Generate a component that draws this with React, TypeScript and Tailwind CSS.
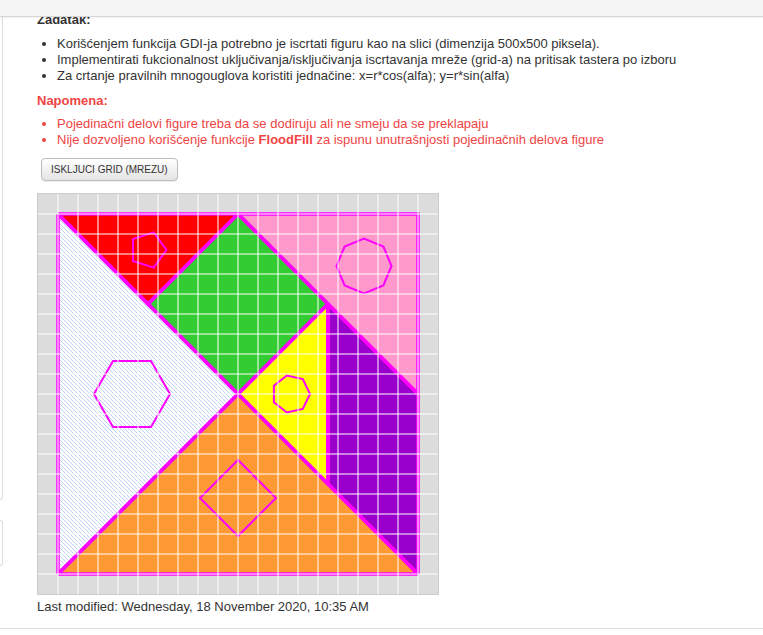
import React from "react";

// regular polygon points, first vertex at angle 0 (pointing right)
const ngon = (cx: number, cy: number, r: number, n: number) =>
  Array.from({ length: n }, (_, i) => {
    const a = (i * 2 * Math.PI) / n;
    return `${(cx + r * Math.cos(a)).toFixed(1)},${(cy + r * Math.sin(a)).toFixed(1)}`;
  }).join(" ");

const pieces = [
  { pts: "20,20 200,200 20,380", fill: "url(#hatch)" },
  { pts: "20,20 200,20 110,110", fill: "#ff0000" },
  { pts: "200,20 290,110 200,200 110,110", fill: "#33cc33" },
  { pts: "200,20 380,20 380,200", fill: "#ff99cc" },
  { pts: "200,200 290,110 290,290", fill: "#ffff00" },
  { pts: "290,110 380,200 380,380 290,290", fill: "#9900cc" },
  { pts: "20,380 200,200 380,380", fill: "#ff9933" },
];

const shapes = [
  ngon(110, 56, 18.5, 5),
  ngon(326, 72, 27.5, 8),
  ngon(94, 200, 38, 6),
  ngon(253, 200, 19, 7),
  ngon(200, 304, 38, 4),
];

const Tangram = () => {
  const grid = Array.from({ length: 19 }, (_, i) => (i + 1) * 20);
  return (
    <svg width="400" height="400" viewBox="0 0 400 400" className="block">
      <defs>
        <pattern id="hatch" width="4" height="4" patternUnits="userSpaceOnUse">
          <rect width="4" height="4" fill="#ffffff" />
          <path d="M0,0 L4,4 M-1,3 L1,5 M3,-1 L5,1" stroke="#a6c2f4" strokeWidth="0.75" />
        </pattern>
      </defs>
      <rect width="400" height="400" fill="#dcdcdc" />
      {pieces.map((p, i) => (
        <polygon key={i} points={p.pts} fill={p.fill} />
      ))}
      {pieces.map((p, i) => (
        <polygon
          key={"o" + i}
          points={p.pts}
          fill="none"
          stroke="#ff00ff"
          strokeWidth="3.5"
          strokeLinejoin="miter"
          strokeMiterlimit="1.5"
        />
      ))}
      {shapes.map((s, i) => (
        <polygon key={"s" + i} points={s} fill="none" stroke="#ff00ff" strokeWidth="2" />
      ))}
      {grid.map((g) => (
        <g key={g} stroke="#ffffff" strokeOpacity="0.5" strokeWidth="2">
          <line x1={g} y1="0" x2={g} y2="400" />
          <line x1="0" y1={g} x2="400" y2={g} />
        </g>
      ))}
    </svg>
  );
};

export default function App() {
  return (
    <div className="relative w-[763px] h-[635px] overflow-hidden bg-white font-['Liberation_Sans',Arial,sans-serif] text-[13px] leading-[16px] text-[#333]">
      {/* top bar over the content */}
      <div className="absolute top-0 inset-x-0 h-[17px] z-10 bg-[#f5f5f5] border-b border-[#d6d6d6] shadow-[0_1px_2px_rgba(0,0,0,0.06)]"></div>

      <div className="flex h-[628px]">
        {/* left sidebar edges */}
        <div className="w-[3px] shrink-0 flex flex-col">
          <div className="h-[500px] border-r border-b border-[#dcdcdc] rounded-br-[4px]"></div>
          <div className="h-[20px]"></div>
          <div className="h-[46px] border-r border-y border-[#dcdcdc] rounded-r-[4px]"></div>
        </div>

        <div className="flex-1 pl-[34px] pt-[12px]">
          <div className="font-bold">Zadatak:</div>
          <ul className="list-disc pl-5 mt-[8px]">
            <li>Korišćenjem funkcija GDI-ja potrebno je iscrtati figuru kao na slici (dimenzija 500x500 piksela).</li>
            <li>Implementirati fukcionalnost uključivanja/isključivanja iscrtavanja mreže (grid-a) na pritisak tastera po izboru</li>
            <li>Za crtanje pravilnih mnogouglova koristiti jednačine: x=r*cos(alfa); y=r*sin(alfa)</li>
          </ul>

          <div className="font-bold text-[#f04444] mt-[9px]">Napomena:</div>
          <ul className="list-disc pl-5 mt-[7px] text-[#f04444]">
            <li>Pojedinačni delovi figure treba da se dodiruju ali ne smeju da se preklapaju</li>
            <li>
              Nije dozvoljeno korišćenje funkcije <span className="font-bold">FloodFill</span> za ispunu unutrašnjosti pojedinačnih delova figure
            </li>
          </ul>

          <button className="mt-[10px] ml-[4px] h-[23px] px-[9px] text-[10px] leading-none text-[#333] bg-gradient-to-b from-white to-[#e4e4e4] border border-[#bdbdbd] rounded-[4px] shadow-[0_1px_1px_rgba(0,0,0,0.08)]">
            ISKLJUCI GRID (MREZU)
          </button>

          <div className="mt-[12px] w-[402px] border border-[#cccccc]">
            <Tangram />
          </div>

          <div className="mt-[4px]">Last modified: Wednesday, 18 November 2020, 10:35 AM</div>
        </div>
      </div>
      <div className="border-t border-[#dddddd]"></div>
    </div>
  );
}
